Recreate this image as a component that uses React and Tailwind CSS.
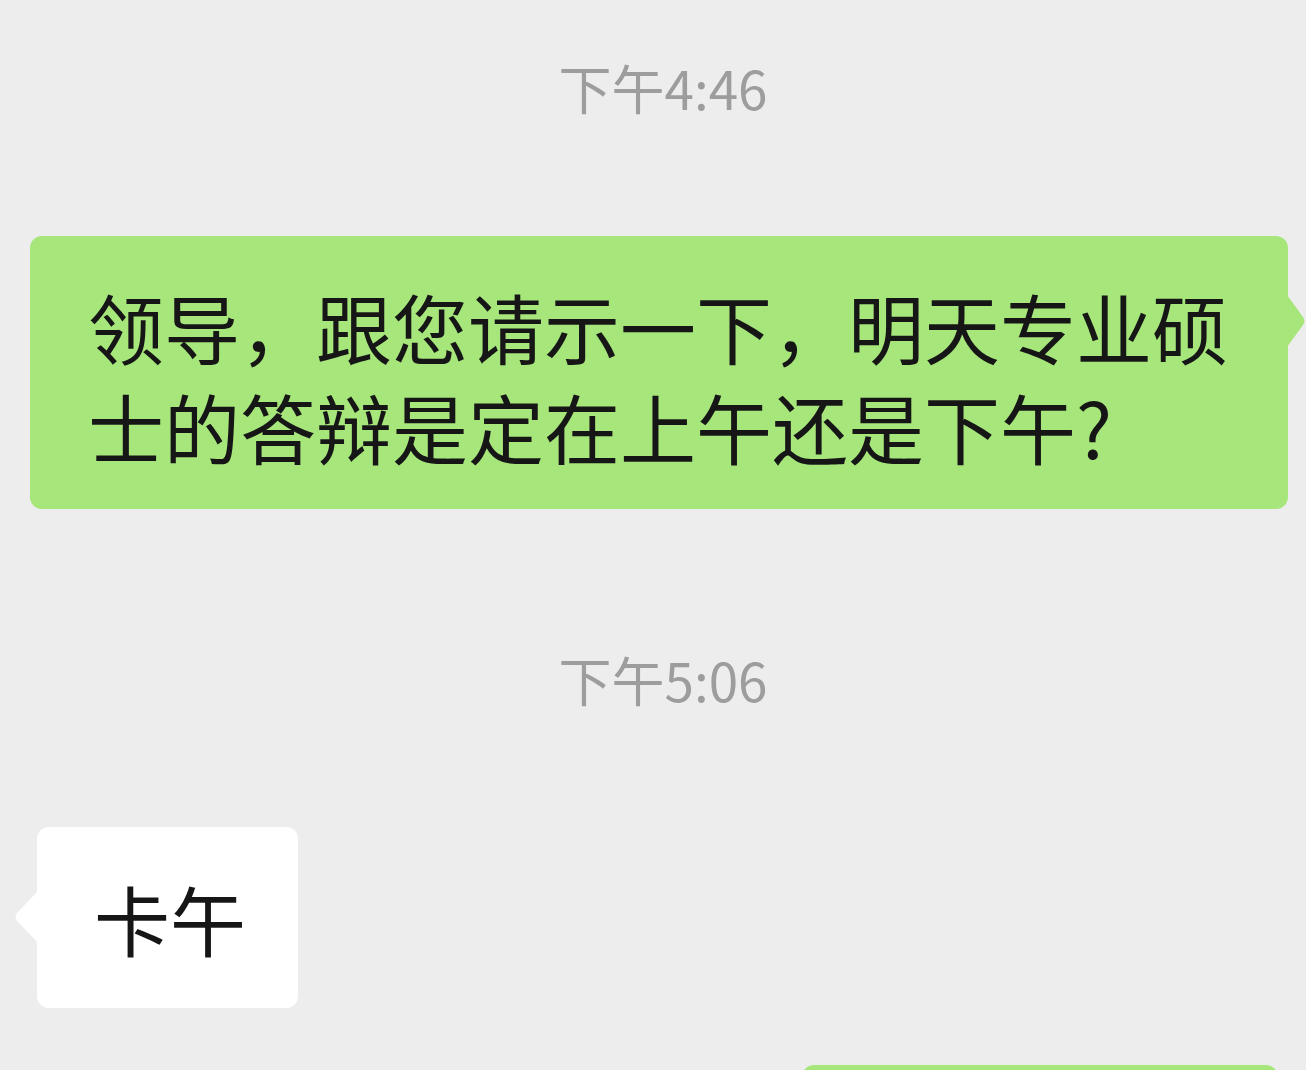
const cjk = { fontFamily: '"Noto Sans CJK SC", "Noto Sans", sans-serif' };

const Stamp = ({ children, className }) => (
  <div className={"shrink-0 text-center text-[53px] leading-[60px] text-[#9d9d9d] " + className} style={cjk}>
    {children}
  </div>
);

const App = () => {
  return (
    <div className="w-[1306px] h-[1070px] overflow-hidden bg-[#ededed] flex flex-col" style={cjk}>
      <Stamp className="mt-[57px] mb-[3px] pl-[20px]">下午4:46</Stamp>

      <div className="relative shrink-0 mt-[116px] ml-[30px] w-[1258px] rounded-[12px] bg-[#a6e67b] pl-[58px] pt-[40px] pb-[33px] text-[76px] leading-[100px] text-[#161616]">
        <div className="whitespace-nowrap">领导，跟您请示一下，明天专业硕</div>
        <div className="whitespace-nowrap">士的答辩是定在上午还是下午?</div>
        <svg className="absolute right-[-18px] top-[59px]" width="19" height="52" viewBox="0 0 19 52">
          <path d="M0 0 L16 22 Q19 26 16 30 L0 52 Z" fill="#a6e67b" />
        </svg>
      </div>

      <Stamp className="mt-[140px] mb-[3px] pl-[20px]">下午5:06</Stamp>

      <div className="relative shrink-0 mt-[115px] ml-[37px] w-[261px] h-[181px] rounded-[12px] bg-white flex items-center pl-[57px] text-[76px] leading-[100px] text-[#161616]">
        <span>卡午</span>
        <svg className="absolute left-[-23px] top-[64px]" width="24" height="52" viewBox="0 0 24 52">
          <path d="M24 0 L3 22 Q0 26 3 30 L24 52 Z" fill="#ffffff" />
        </svg>
      </div>

      <div className="shrink-0 mt-[57px] ml-[802px] w-[476px] h-[40px] rounded-t-[12px] bg-[#a6e67b]"></div>
    </div>
  );
};

export default App;
